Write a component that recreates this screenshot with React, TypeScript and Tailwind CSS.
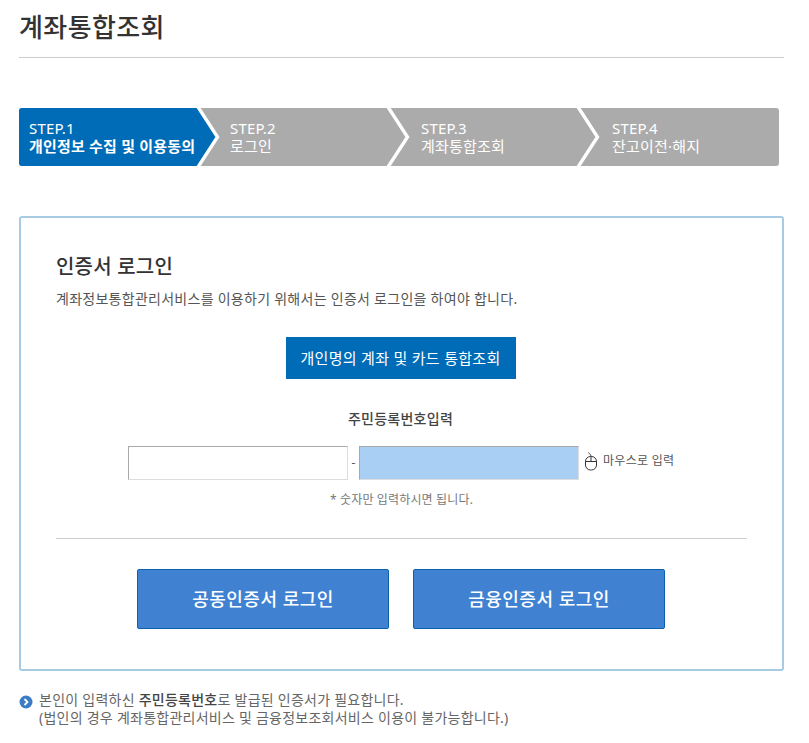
import React from 'react'

const steps = [
    { label: 'STEP.1', title: '개인정보 수집 및 이용동의', width: 'w-[182px]', pad: 'pl-[10px]', active: true, arrow: true },
    { label: 'STEP.2', title: '로그인', width: 'w-[190px]', pad: 'pl-[29px]', active: false, arrow: true },
    { label: 'STEP.3', title: '계좌통합조회', width: 'w-[190px]', pad: 'pl-[30px]', active: false, arrow: true },
    { label: 'STEP.4', title: '잔고이전·해지', width: 'w-[198px]', pad: 'pl-[31px]', active: false, arrow: false },
]

function StepBar() {
    return (
        <div className="flex h-[58px] w-[760px] rounded-[3px] overflow-hidden bg-[#ababab]">
            {steps.map((step) => (
                <div
                    key={step.label}
                    className={[
                        'relative flex flex-col justify-center text-white text-[15px] leading-[18px] tracking-[0.2px]',
                        step.width,
                        step.pad,
                        step.active ? 'bg-[#006cb7]' : '',
                    ].join(' ')}
                >
                    <span>{step.label}</span>
                    <span className={step.active ? 'font-semibold whitespace-nowrap' : 'whitespace-nowrap'}>{step.title}</span>
                    {step.arrow && (
                        <svg className="absolute top-0 left-full -ml-[5px] z-10" width="24" height="58" viewBox="0 0 24 58">
                            <path d="M0 0 L2 0 L21.5 29 L2 58 L0 58 Z" fill={step.active ? '#006cb7' : '#ababab'} />
                            <path d="M2 -1 L21.5 29 L2 59" fill="none" stroke="#fff" strokeWidth="3.4" />
                        </svg>
                    )}
                </div>
            ))}
        </div>
    )
}

function MouseIcon() {
    return (
        <svg width="14" height="19" viewBox="0 0 14 19" fill="none" stroke="#333" strokeWidth="1" className="shrink-0">
            <rect x="1.5" y="4.5" width="11" height="13.5" rx="5" />
            <path d="M1.5 9.5 H12.5 M7 4.5 V9.5 M7 4.5 C7 2.5 5.5 2 4.5 0.5" />
        </svg>
    )
}

export default function App() {
    return (
        <div className="w-[809px] h-[743px] overflow-hidden bg-white pl-[19px] pr-[25px] text-[#555] font-['Noto_Sans','Noto_Sans_CJK_KR',sans-serif]">
            {/* Title */}
            <h1 className="h-[58px] border-b border-[#ccc] pt-[9px] text-[26px] leading-[36px] font-medium tracking-[0.4px] text-[#333]">
                계좌통합조회
            </h1>

            <div className="mt-[50px]">
                <StepBar />
            </div>

            {/* Login panel */}
            <div className="mt-[50px] h-[455px] border-2 border-[#a6cbe3] rounded-[3px] px-[35px] pt-[35px]">
                <h2 className="text-[20px] leading-[28px] font-medium text-[#333] tracking-[0.2px]">인증서 로그인</h2>
                <p className="mt-[9px] text-[14px] leading-[18px] tracking-[0.27px] text-[#555]">
                    계좌정보통합관리서비스를 이용하기 위해서는 인증서 로그인을 하여야 합니다.
                </p>

                <div className="mt-[29px] flex justify-center pr-[2px]">
                    <button className="w-[230px] h-[42px] bg-[#006cb7] text-white text-[15px] tracking-[0.3px]">
                        개인명의 계좌 및 카드 통합조회
                    </button>
                </div>

                <p className="mt-[30px] text-center text-[14px] leading-[20px] tracking-[0.25px] font-medium text-[#444] pr-[2px]">주민등록번호입력</p>

                <div className="mt-[17px] ml-[72px] flex items-center h-[34px]">
                    <div className="w-[220px] h-[34px] bg-white border border-[#ddd] border-t-[#a9a9a9] border-l-[#a9a9a9]" />
                    <span className="w-[11px] text-center text-[12px]">-</span>
                    <div className="w-[220px] h-[34px] bg-[#a9cff5] border border-[#ddd] border-t-[#a9a9a9] border-l-[#a9a9a9]" />
                    <div className="ml-[5px] -mt-[4px] flex items-center gap-[5px] text-[12px] tracking-[0.3px] text-[#555] whitespace-nowrap">
                        <MouseIcon />
                        <span>마우스로 입력</span>
                    </div>
                </div>

                <p className="mt-[11px] text-center text-[12px] leading-[18px] tracking-[0.15px] text-[#777]">* 숫자만 입력하시면 됩니다.</p>

                <div className="mt-[29px] w-[691px] border-t border-[#ccc]" />

                <div className="mt-[30px] ml-[81px] flex gap-[24px]">
                    <button className="w-[252px] h-[60px] bg-[#4082d1] border border-[#0b62ac] rounded-[2px] text-white text-[18px] tracking-[0.5px] font-medium">
                        공동인증서 로그인
                    </button>
                    <button className="w-[252px] h-[60px] bg-[#4082d1] border border-[#0b62ac] rounded-[2px] text-white text-[18px] tracking-[0.5px] font-medium">
                        금융인증서 로그인
                    </button>
                </div>
            </div>

            {/* Notice */}
            <div className="mt-[20px] flex gap-[6px] text-[14px] leading-[18px] tracking-[0.25px] text-[#666]">
                <svg width="14" height="14" viewBox="0 0 14 14" className="mt-[4px] shrink-0">
                    <circle cx="7" cy="7" r="6.5" fill="#3a7cc6" />
                    <path d="M5.5 4 L8.5 7 L5.5 10" fill="none" stroke="#fff" strokeWidth="1.8" />
                </svg>
                <div>
                    <p>
                        본인이 입력하신 <strong className="font-medium text-[#444]">주민등록번호</strong>로 발급된 인증서가 필요합니다.
                    </p>
                    <p>(법인의 경우 계좌통합관리서비스 및 금융정보조회서비스 이용이 불가능합니다.)</p>
                </div>
            </div>
        </div>
    )
}
